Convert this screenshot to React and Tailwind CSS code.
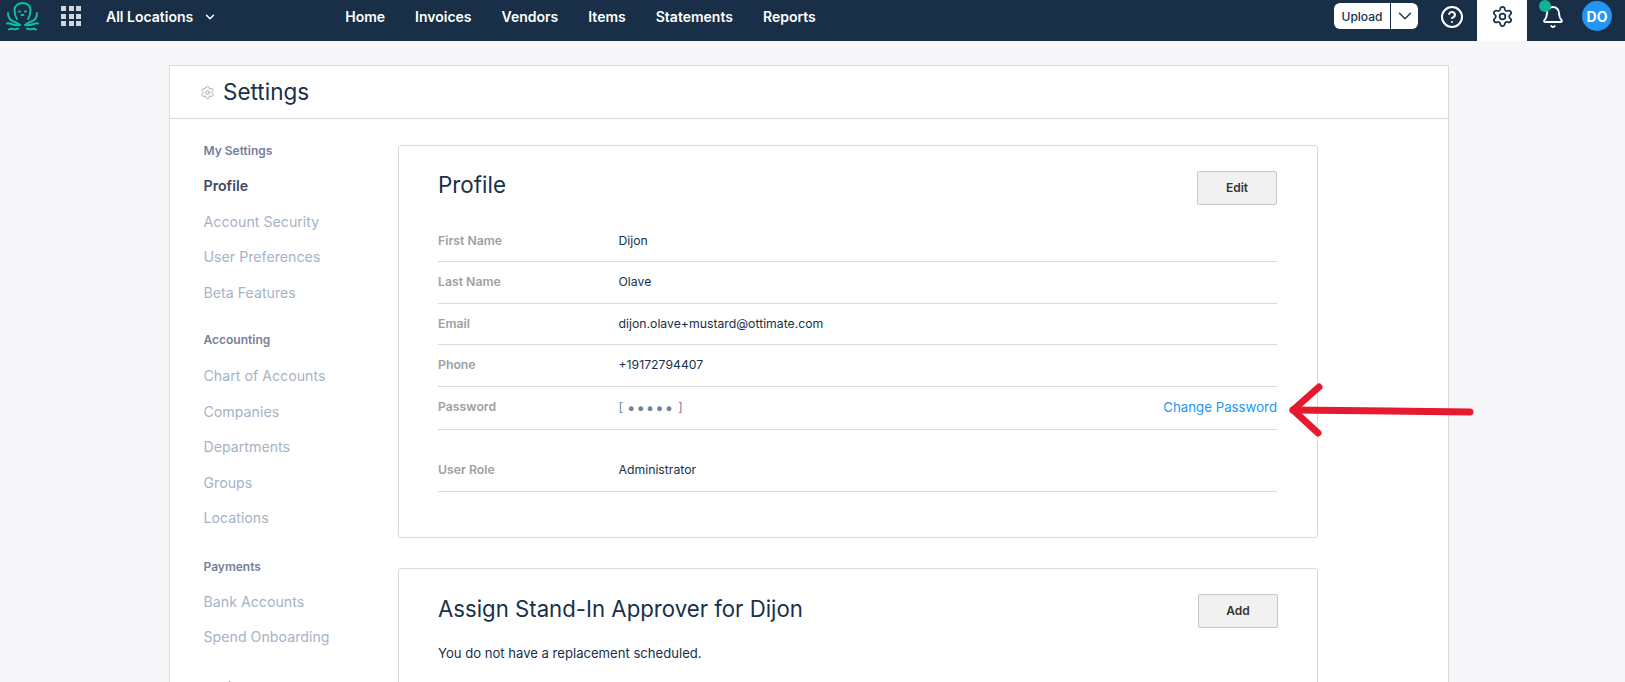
import { ChevronDown, CircleHelp, Settings, Bell } from "lucide-react"

const NAV = ["Home", "Invoices", "Vendors", "Items", "Statements", "Reports"]

const SIDEBAR = [
  { title: "My Settings", top: "mt-[8px]", gap: "mb-[21px]", items: ["Profile", "Account Security", "User Preferences", "Beta Features"] },
  { title: "Accounting", top: "mt-[9px]", gap: "mb-[22px]", items: ["Chart of Accounts", "Companies", "Departments", "Groups", "Locations"] },
  { title: "Payments", top: "mt-[8px]", gap: "mb-[23px]", items: ["Bank Accounts", "Spend Onboarding"] },
  { title: "Invoices", top: "", gap: "", items: [] },
]

const ROWS = [
  { label: "First Name", value: "Dijon" },
  { label: "Last Name", value: "Olave" },
  { label: "Email", value: "dijon.olave+mustard@ottimate.com" },
  { label: "Phone", value: "+19172794407" },
]

const Logo = () => (
  <svg width="34" height="30" viewBox="6 2 34 30" fill="none" stroke="#10bf9d" strokeWidth="2" strokeLinecap="round" strokeLinejoin="round">
    <path d="M17 19C15 16 14.500 13 14.500 10C14.500 6 18 3 22.500 3C27 3 30.500 6 30.500 10C30.500 13 30 16 28 19" />
    <path d="M19 11.500h1M25 11.500h1M21.500 15h2" />
    <path d="M8 13C8 18 11 21 15 22C17 23 18.500 23.500 20 25" />
    <path d="M37 13C37 18 34 21 30 22C28 23 26.500 23.500 25 25" />
    <path d="M7 23.500C10 22 13 26 19 25" />
    <path d="M38 23.500C35 22 32 26 26 25" />
    <path d="M9 29.500C12 27.500 14 30.500 18 28.500" />
    <path d="M36 29.500C33 27.500 31 30.500 27 28.500" />
  </svg>
)

const Grid = () => (
  <div className="grid grid-cols-3 gap-[2.500px] w-[20px]">
    {Array.from({ length: 9 }).map((_, i) => (
      <div key={i} className="w-[5px] h-[5px] bg-[#d4d6d9]" />
    ))}
  </div>
)

const Arrow = () => (
  <svg className="absolute left-[1285px] top-[378px]" width="195" height="62" viewBox="0 0 195 62" fill="none" stroke="#e5192f" strokeWidth="7" strokeLinecap="round" strokeLinejoin="round">
    <path d="M34 9 L8 32 L33 55" />
    <path d="M8 32 C60 33 130 33 185 34" />
  </svg>
)

export default function App() {
  return (
    <div className="relative h-[682px] overflow-hidden bg-[#f7f7f9] font-['Inter',sans-serif] text-[#18304a]">
      <header className="h-[41px] bg-[#182f47] flex items-start text-white">
        <div className="ml-[6px] mt-[2px] w-[34px]"><Logo /></div>
        <div className="ml-[21px] mt-[6px]"><Grid /></div>
        <button className="ml-[25px] h-[33px] flex items-center gap-[10px] text-[14px] font-semibold">
          All Locations
          <ChevronDown className="w-[14px] h-[14px]" strokeWidth={2.500} />
        </button>
        <nav className="ml-[128px] h-[33px] flex items-center gap-[30px] text-[14px] font-semibold">
          {NAV.map((n) => <span key={n}>{n}</span>)}
        </nav>
        <div className="ml-auto flex items-start h-full">
          <div className="mt-[3px] flex items-center h-[26px] w-[84px] rounded-[6px] bg-white text-[#18304a] text-[12px] font-medium">
            <span className="w-[57px] h-full pt-[1px] flex items-center justify-center border-r border-[#18304a]">Upload</span>
            <span className="flex-1 flex items-center justify-center"><ChevronDown className="w-[22px] h-[22px]" strokeWidth={1.500} /></span>
          </div>
          <CircleHelp className="ml-[22px] mt-[5px] w-[24px] h-[24px]" strokeWidth={2} />
          <div className="ml-[13px] pt-[5px] w-[50px] h-full bg-white flex items-start justify-center text-[#18304a]">
            <Settings className="w-[23px] h-[23px]" strokeWidth={1.800} />
          </div>
          <div className="relative ml-[14px] mt-[5px] w-[24px] h-[24px]">
            <Bell className="w-[24px] h-[24px]" strokeWidth={1.800} />
            <div className="absolute -top-[5px] -left-[2px] w-[12px] h-[12px] rounded-full bg-[#0fb393]" />
          </div>
          <div className="ml-[17px] mr-[13px] mt-[1px] w-[30px] h-[30px] rounded-full bg-[#2196f3] flex items-center justify-center text-[14px] font-bold">DO</div>
        </div>
      </header>

      <main className="ml-[169px] mt-[24px] w-[1280px] border border-[#d9d9d9] bg-white">
        <div className="h-[53px] border-b border-[#d9d9d9] flex items-center pl-[30px]">
          <Settings className="w-[15px] h-[15px] text-[#a6a6a6]" strokeWidth={1.500} />
          <h1 className="ml-[8px] text-[22.500px] leading-none text-[#18304a]">Settings</h1>
        </div>
        <div className="flex">
          <aside className="w-[228px] pl-[33.500px] pt-[23px] shrink-0">
            {SIDEBAR.map((s) => (
              <div key={s.title} className={s.gap}>
                <div className="text-[12px] font-semibold text-[#76809a] h-[18px] leading-[18px]">{s.title}</div>
                <div className={`${s.top} flex flex-col`}>
                  {s.items.map((item) => (
                    <a key={item} className={item === "Profile" ? "h-[35.500px] leading-[35.500px] text-[14.200px] font-semibold text-[#3f4a5f]" : "h-[35.500px] leading-[35.500px] text-[14.200px] text-[#a6b3c7]"}>{item}</a>
                  ))}
                </div>
              </div>
            ))}
          </aside>
          <div className="w-[920px] pt-[26px]">
            <section className="h-[393px] border border-[#d9d9d9] rounded-[3px] pl-[39px] pr-[40px] pt-[25px]">
              <div className="flex items-start justify-between h-[49.500px]">
                <h2 className="text-[22.400px] leading-[28px] text-[#18304a]">Profile</h2>
                <button className="w-[80px] h-[34px] border border-[#c8c8c8] rounded-[2px] bg-[#f1f1f1] text-[12px] font-semibold text-[#333]">Edit</button>
              </div>
              {ROWS.map((r) => (
                <div key={r.label} className="flex items-center h-[41.500px] border-b border-[#d9d9d9] text-[12.250px]">
                  <span className="w-[180.500px] font-semibold text-[#a0a0a0]">{r.label}</span>
                  <span className="text-[#18304a]">{r.value}</span>
                </div>
              ))}
              <div className="flex items-center h-[43px] border-b border-[#d9d9d9] text-[12.250px]">
                <span className="w-[180.500px] font-semibold text-[#a0a0a0]">Password</span>
                <span className="text-[#76809a] flex items-center gap-[4px]">[<span className="text-[15px] leading-none tracking-[1px]">•••••</span>]</span>
                <a className="ml-auto text-[#2196f3] text-[13.250px]">Change Password</a>
              </div>
              <div className="flex items-center h-[62px] pt-[20px] border-b border-[#d9d9d9] text-[12.250px]">
                <span className="w-[180.500px] font-semibold text-[#a0a0a0]">User Role</span>
                <span className="text-[#18304a]">Administrator</span>
              </div>
            </section>
            <section className="mt-[30px] h-[300px] border border-[#d9d9d9] rounded-[3px] pl-[39px] pr-[40px] pt-[25px]">
              <div className="flex items-start justify-between h-[50px]">
                <h2 className="mt-[1px] text-[22.200px] leading-[28px] text-[#18304a]">Assign Stand-In Approver for Dijon</h2>
                <button className="w-[80px] h-[34px] -mr-[1px] border border-[#c8c8c8] rounded-[2px] bg-[#f1f1f1] text-[12px] font-semibold text-[#333]">Add</button>
              </div>
              <p className="text-[13.100px] text-[#18304a]">You do not have a replacement scheduled.</p>
            </section>
          </div>
        </div>
      </main>
      <Arrow />
    </div>
  )
}
